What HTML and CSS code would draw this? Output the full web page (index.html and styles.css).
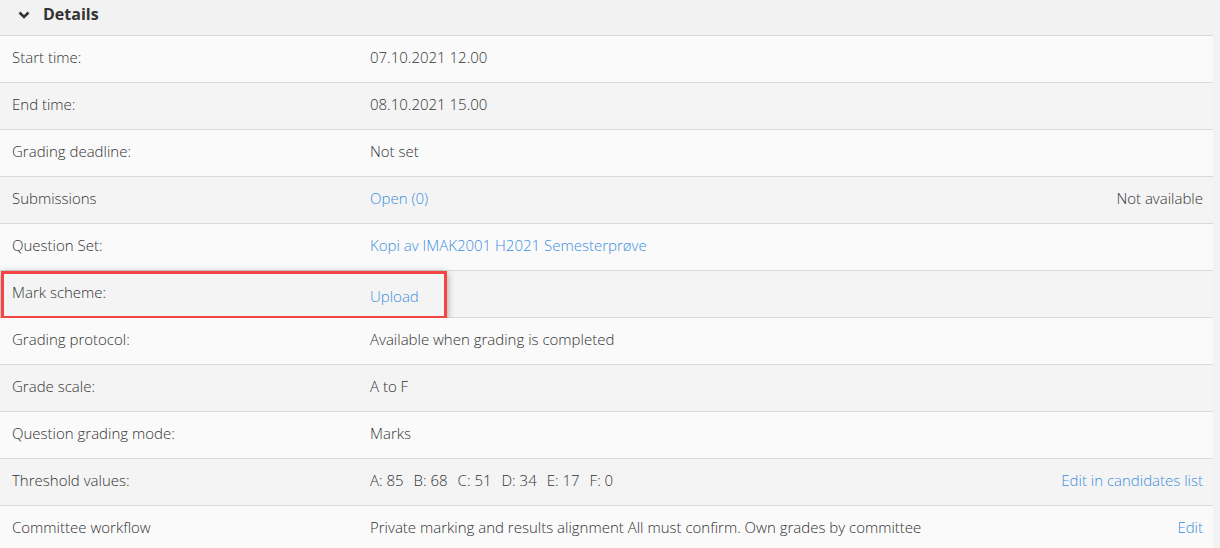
FILE: index.html
```html
<!DOCTYPE html>
<html lang="en">
  <head>
    <meta charset="UTF-8" />
    <title>Details</title>
    <link rel="stylesheet" href="styles.css">
  </head>
  <body>
    <section class="panel">
      <div class="panel-head">
        <svg class="chevron" width="12" height="8" viewBox="0 0 12 8">
          <path d="M1.5 1.5 L6 6 L10.5 1.5" fill="none" stroke="#333" stroke-width="2.6" />
        </svg>
        <h2>Details</h2>
      </div>
      <div class="rows">
        <div class="row light">
          <div class="label">Start time:</div>
          <div class="value">07.10.2021 12.00</div>
          <div class="extra"></div>
        </div>
        <div class="row">
          <div class="label">End time:</div>
          <div class="value">08.10.2021 15.00</div>
          <div class="extra"></div>
        </div>
        <div class="row light">
          <div class="label">Grading deadline:</div>
          <div class="value">Not set</div>
          <div class="extra"></div>
        </div>
        <div class="row">
          <div class="label">Submissions</div>
          <div class="value"><a href="#">Open (0)</a></div>
          <div class="extra">Not available</div>
        </div>
        <div class="row light">
          <div class="label">Question Set:</div>
          <div class="value"><a href="#">Kopi av IMAK2001 H2021 Semesterprøve</a></div>
          <div class="extra"></div>
        </div>
        <div class="row marked">
          <div class="label">Mark scheme:</div>
          <div class="value lower"><a href="#">Upload</a></div>
          <div class="extra"></div>
          <div class="highlight"></div>
        </div>
        <div class="row light">
          <div class="label">Grading protocol:</div>
          <div class="value">Available when grading is completed</div>
          <div class="extra"></div>
        </div>
        <div class="row">
          <div class="label">Grade scale:</div>
          <div class="value">A to F</div>
          <div class="extra"></div>
        </div>
        <div class="row light">
          <div class="label">Question grading mode:</div>
          <div class="value">Marks</div>
          <div class="extra"></div>
        </div>
        <div class="row">
          <div class="label">Threshold values:</div>
          <div class="value thresholds">
            <span>A: 85</span><span>B: 68</span><span>C: 51</span><span>D: 34</span><span>E: 17</span><span>F: 0</span>
          </div>
          <div class="extra"><a href="#">Edit in candidates list</a></div>
        </div>
        <div class="row light">
          <div class="label">Committee workflow</div>
          <div class="value">Private marking and results alignment All must confirm. Own grades by committee</div>
          <div class="extra"><a href="#">Edit</a></div>
        </div>
      </div>
    </section>
  </body>
</html>
```

FILE: styles.css
```css
body {
  margin: 0;
  padding: 0;
  background-color: #f2f2f2;
  font-family: "Open Sans", "Liberation Sans", sans-serif;
  font-weight: 300;
  font-size: 15px;
  color: #333;
}

.panel {
  width: 1213px;
}

.panel-head {
  display: flex;
  align-items: center;
  height: 35px;
  padding-left: 18px;
  border-bottom: 1px solid #dadada;
}

.chevron {
  margin-right: 13px;
  margin-top: -5px;
}

.panel-head h2 {
  margin: 0;
  margin-top: -8px;
  font-size: 16px;
  font-weight: 700;
  color: #333;
}

.row {
  position: relative;
  display: grid;
  grid-template-columns: 358px 1fr auto;
  align-items: center;
  box-sizing: border-box;
  height: 47px;
  padding: 0 10px 4px 12px;
  background-color: #f4f4f4;
  border-bottom: 1px solid #dadada;
}

.row.light {
  background-color: #fafafa;
}

.value.lower {
  margin-top: 8px;
}

.extra {
  text-align: right;
}

a {
  color: #3d8fde;
  text-decoration: none;
}

.thresholds span {
  margin-right: 10px;
}

/* annotation box drawn over the row */
.highlight {
  position: absolute;
  left: 1px;
  top: 0;
  width: 440px;
  height: 42px;
  border: 3px solid #f44545;
  box-shadow: 0 2px 7px rgba(0, 0, 0, 0.4);
  pointer-events: none;
}
```
